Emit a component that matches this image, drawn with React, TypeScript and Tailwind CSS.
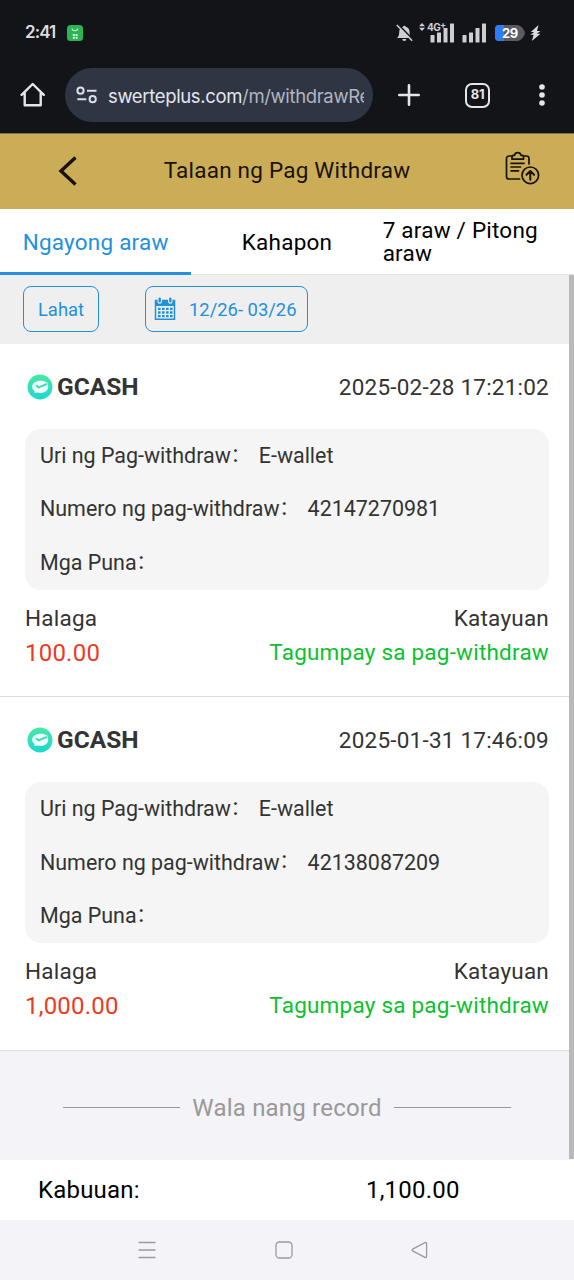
type WithdrawRecord = {
  method: string;
  date: string;
  type: string;
  number: string;
  amount: string;
  status: string;
};

const records: WithdrawRecord[] = [
  {
    method: "GCASH",
    date: "2025-02-28 17:21:02",
    type: "E-wallet",
    number: "42147270981",
    amount: "100.00",
    status: "Tagumpay sa pag-withdraw",
  },
  {
    method: "GCASH",
    date: "2025-01-31 17:46:09",
    type: "E-wallet",
    number: "42138087209",
    amount: "1,000.00",
    status: "Tagumpay sa pag-withdraw",
  },
];

function SignalBars() {
  return (
    <svg width="25" height="20" viewBox="0 0 25 20" fill="#cfcfd2">
      <rect x="0.5" y="12" width="4" height="7.5" rx="0.5" />
      <rect x="7" y="9.5" width="4" height="10" rx="0.5" />
      <rect x="13.5" y="5" width="4" height="14.5" rx="0.5" />
      <rect x="20" y="0.5" width="4" height="19" rx="0.5" />
    </svg>
  );
}

function StatusBar() {
  return (
    <div className="flex h-[65px] items-center pl-[25px] pr-[33px] font-['Inter',sans-serif] text-[#dcdcde]">
      <span className="w-[31px] whitespace-nowrap text-[17px] font-semibold tracking-[-0.9px]">2:41</span>
      <svg className="ml-[11px]" width="16" height="16" viewBox="0 0 16 16">
        <rect width="16" height="16" rx="3.5" fill="#2cb455" />
        <path d="M5 3.5c.6 3 5.2 3 5.8 0" fill="none" stroke="#d9f5e1" strokeWidth="1.1" />
        <path d="M5.8 9h2v2h-2zM8.6 9h2v2h-2zM5.8 11.8h2v2h-2zM8.6 11.8h2v2h-2z" fill="#d9f5e1" />
      </svg>

      <svg className="ml-auto" width="17" height="18" viewBox="0 0 17 18">
        <path
          d="M1 14h14.6c-1.500-1.600-2-2.800-2-5.800 0-3-1.500-5-3.800-5.500a1.500 1.500 0 0 0-2.800 0C4.700 3.200 3.200 5.200 3.200 8.200c0 3-.7 4.200-2.200 5.800zM6.300 15a2 2 0 0 0 4 0z"
          fill="#cfcfd2"
        />
        <path d="M2 .2l15.500 16" stroke="#131418" strokeWidth="1.8" />
        <path d="M.8 1l15.400 15.800" stroke="#cfcfd2" strokeWidth="1.6" />
      </svg>

      <div className="relative ml-[17px] flex">
        <svg className="absolute left-[-11px] top-0" width="6" height="8" viewBox="0 0 6 8" fill="#cfcfd2">
          <path d="M3 0L6 3.300H0zM3 8L0 4.700h6z" />
        </svg>
        <SignalBars />
        <span className="absolute left-[-3px] top-0 h-[9px] w-[13px] bg-[#131418] text-[10px] font-bold leading-[9px] tracking-[-0.6px] text-[#cfcfd2]">
          4G
        </span>
        <span className="absolute left-[10px] top-[-3px] text-[9px] font-bold leading-[9px] text-[#cfcfd2]">+</span>
      </div>
      <div className="ml-[7px]">
        <SignalBars />
      </div>

      <div className="relative ml-[8px] h-4 w-[30px]">
        <svg width="30" height="16" viewBox="0 0 30 16">
          <path d="M4 0H22c4 0 7 4 8 8-1 4-4 8-8 8H4a4 4 0 0 1-4-4V4a4 4 0 0 1 4-4z" fill="#5b5b61" />
          <path d="M4 0H9V16H4a4 4 0 0 1-4-4V4a4 4 0 0 1 4-4z" fill="#2e7cf6" />
        </svg>
        <span className="absolute left-[7px] top-0 text-[13px] font-bold leading-4 tracking-[-0.5px] text-white">29</span>
      </div>
      <svg className="ml-[5px]" width="11" height="16" viewBox="0 0 11 16" fill="#dcdcde">
        <path d="M8.5 0L0.8 7h3.4L0.3 9.800h3.400L1.800 16 10.500 8.800H6.800L10.500 6H7z" />
      </svg>
    </div>
  );
}

function BrowserBar() {
  return (
    <div className="flex h-[60px] items-center pl-[20px] font-['Inter',sans-serif]">
      <svg width="26" height="26" viewBox="0 0 26 26" fill="none" stroke="#e6e6e9" strokeWidth="2.4" strokeLinejoin="round">
        <path d="M1.6 12.8L12.7 2l11.1 10.8M4.700 11v12.300h16V11" strokeLinecap="round" />
      </svg>
      <div className="ml-[19px] flex h-[54px] w-[308px] items-center rounded-full bg-[#303544] pl-[11px] pr-[9px]">
        <svg width="22" height="18" viewBox="0 0 22 18" fill="none" stroke="#dcdfe8" strokeWidth="2">
          <circle cx="4.5" cy="4.7" r="3.1" />
          <path d="M11 4.7h9.5M1.3 13.2h9" />
          <circle cx="16.7" cy="13.2" r="3.1" />
        </svg>
        <div className="ml-[10px] mt-[3px] flex-1 overflow-hidden whitespace-nowrap text-[18.5px] tracking-[-0.35px] text-[#e3e5ee]">
          swerteplus.com<span className="text-[#b1b5c2]">/m/withdrawRe</span>
        </div>
      </div>
      <svg className="ml-[25px]" width="22" height="22" viewBox="0 0 22 22" stroke="#e6e6e9" strokeWidth="2.6" strokeLinecap="round">
        <path d="M11 1.3v19.4M1.3 11h19.4" />
      </svg>
      <div className="ml-[45px] flex h-[25px] w-[25px] items-center justify-center rounded-[7px] border-[2.5px] border-[#e6e6e9] text-[13px] font-bold tracking-[-0.3px] text-[#e6e6e9]">
        81
      </div>
      <svg className="ml-[49px]" width="6" height="22" viewBox="0 0 6 22" fill="#e6e6e9">
        <circle cx="3" cy="3" r="2.8" />
        <circle cx="3" cy="11" r="2.8" />
        <circle cx="3" cy="19" r="2.8" />
      </svg>
    </div>
  );
}

function PageHeader() {
  return (
    <header className="flex h-[76px] items-center border-t border-[#7f7350] bg-[#cbad58] pb-[2px] pl-[58px] pr-[34px] text-[#1a1208]">
      <svg width="20" height="30" viewBox="0 0 20 30" fill="none" stroke="#1a1208" strokeWidth="3.4">
        <path d="M17.500 1.500L3 15l14.500 13.500" />
      </svg>
      <h1 className="-ml-[9px] flex-1 text-center text-[22.5px] tracking-[0.22px]">Talaan ng Pag Withdraw</h1>
      <svg className="-mt-[5px]" width="35" height="34" viewBox="0 0 35 34" fill="none" stroke="#1a1208" strokeWidth="1.7" strokeLinecap="round" strokeLinejoin="round">
        <path d="M7 5H4a2.500 2.500 0 0 0-2.500 2.500v18A2.500 2.500 0 0 0 4 28h10.500M18.500 5h3A2.500 2.500 0 0 1 24 7.500V13" />
        <path d="M7 8.200V5.500Q7 4.300 8.200 4.300h1.300a3.300 3.300 0 0 1 6.500 0h1.300q1.200 0 1.200 1.200v2.700z" />
        <path d="M6 12.300h13M6 16h9.500M6 19.800h7.500" />
        <circle cx="25.3" cy="24.3" r="8.3" />
        <path d="M25.300 28.700v-8.400M21.500 23.800l3.800-3.800 3.800 3.800" strokeWidth="2" />
      </svg>
    </header>
  );
}

function Tabs() {
  return (
    <nav className="grid h-[66px] grid-cols-3 border-b border-[#e3e3e3] bg-white text-[22.5px] leading-[23px] tracking-[0.22px] text-black">
      <div className="-mb-px flex items-center justify-center border-b-[3px] border-[#2490db] pt-[3px] text-[#2490db]">
        Ngayong araw
      </div>
      <div className="flex items-center justify-center pt-px">Kahapon</div>
      <div className="flex items-center pt-px">
        <span className="w-[175px]">7 araw / Pitong araw</span>
      </div>
    </nav>
  );
}

function CalendarIcon() {
  return (
    <svg width="22" height="24" viewBox="0 0 22 24">
      <path d="M1.5 3.5h19v18.7H1.5z" fill="none" stroke="#2490db" strokeWidth="1.5" />
      <path d="M1 3h20v6H1z" fill="#2490db" />
      <path d="M5.7 3v1.500M16.300 3v1.500" stroke="#efefef" strokeWidth="4.500" strokeLinecap="round" />
      <path d="M5.700 1.800v2.400M16.300 1.800v2.400" stroke="#2490db" strokeWidth="2.400" strokeLinecap="round" />
      <path
        d="M4 11.800h2.600M8 11.800h2.600M12 11.800h2.600M16 11.800h2.600M4 15.500h2.600M8 15.500h2.600M12 15.500h2.600M16 15.500h2.600M4 19.200h2.600M8 19.200h2.600M12 19.200h2.600M16 19.200h2.600"
        stroke="#2490db"
        strokeWidth="2.300"
      />
    </svg>
  );
}

function Filters() {
  return (
    <div className="flex h-[69px] bg-[#efefef] pl-[23px] pt-[11px] text-[18.4px] text-[#2490db]">
      <button className="h-[46px] w-[76px] rounded-[8px] border border-[#2490db] pt-px">Lahat</button>
      <button className="ml-[46px] flex h-[46px] w-[163px] items-center rounded-[8px] border border-[#2490db] pl-[8px]">
        <CalendarIcon />
        <span className="ml-[13px] mt-px whitespace-nowrap">12/26- 03/26</span>
      </button>
    </div>
  );
}

function GcashLogo() {
  return (
    <svg width="26" height="26" viewBox="0 0 26 26">
      <defs>
        <linearGradient id="gcash" x1="0" y1="0" x2="0" y2="1">
          <stop offset="0" stopColor="#48e8a6" />
          <stop offset="1" stopColor="#1cd8d0" />
        </linearGradient>
      </defs>
      <circle cx="13" cy="13" r="12.5" fill="url(#gcash)" />
      <path d="M13.5 6.8c3 0 4.500.7 6.500 1.600.8 1 1.200 2.400 1.200 4.300 0 3.700-3.400 6.300-8 6.300-1 0-1.800-.1-2.600-.4L7.600 19l-.2-2.200C5.900 15.700 5.200 14.300 5.200 12.700c0-3.400 3.600-5.900 8.300-5.900z" fill="#f2fffb" />
      <path d="M9 11.200l2.700 2.200L20 9.800" fill="none" stroke="#33ddb8" strokeWidth="1.8" />
    </svg>
  );
}

function DetailRow({ label, value }: { label: string; value?: string }) {
  return (
    <div className="flex h-[53.5px] items-center">
      <span>{label}</span>
      <span className="w-[22px] text-[19px]">：</span>
      {value && <span className="ml-[6px]">{value}</span>}
    </div>
  );
}

function RecordCard({ record }: { record: WithdrawRecord }) {
  return (
    <article className="h-[353.4px] border-b border-[#dedede] bg-white px-[25px] text-[21.45px] text-[#333]">
      <div className="flex h-[85px] items-center pt-px">
        <span className="ml-[2px]">
          <GcashLogo />
        </span>
        <span className="ml-[4px] text-[24.5px] font-bold">{record.method}</span>
        <span className="ml-auto pt-px text-[22.5px] tracking-[0.22px]">{record.date}</span>
      </div>
      <div className="h-[161px] rounded-[16px] bg-[#f5f5f5] pl-[15px]">
        <DetailRow label="Uri ng Pag-withdraw" value={record.type} />
        <DetailRow label="Numero ng pag-withdraw" value={record.number} />
        <DetailRow label="Mga Puna" />
      </div>
      <div className="mt-[12px] flex h-[33px] items-center justify-between text-[22.5px] tracking-[0.22px]">
        <span>Halaga</span>
        <span>Katayuan</span>
      </div>
      <div className="flex h-[35px] items-center justify-between text-[22.5px] tracking-[0.22px]">
        <span className="text-[24px] text-[#ec3a24]">{record.amount}</span>
        <span className="text-[#0bc12f]">{record.status}</span>
      </div>
    </article>
  );
}

function NavButtons() {
  return (
    <div className="flex h-[60px] items-center bg-[#f4f3f8] pl-[138px] text-[#9b9a9f]">
      <svg width="18" height="18" viewBox="0 0 18 18" stroke="currentColor" strokeWidth="1.3">
        <path d="M.5 1.5h17M.5 9h17M.5 16.5h17" />
      </svg>
      <svg className="ml-[119px]" width="18" height="18" viewBox="0 0 18 18" fill="none" stroke="currentColor" strokeWidth="1.3">
        <rect x="1" y="1" width="16" height="16" rx="3.5" />
      </svg>
      <svg className="ml-[118px]" width="18" height="18" viewBox="0 0 18 18" fill="none" stroke="currentColor" strokeWidth="1.3" strokeLinejoin="round">
        <path d="M1.600 8.200L14 1.700q1.600-.7 1.600 1v12.600q0 1.700-1.600 1L1.600 9.800q-1.200-.8 0-1.600z" />
      </svg>
    </div>
  );
}

export default function App() {
  return (
    <div className="flex h-[1280px] w-[574px] flex-col overflow-hidden bg-white font-['Roboto','Noto_Sans_CJK_SC',sans-serif]">
      <div className="h-[133px] shrink-0 bg-[#131418]">
        <StatusBar />
        <BrowserBar />
      </div>
      <PageHeader />
      <Tabs />
      <main className="relative h-[885px] bg-[#f4f3f8]">
        <Filters />
        {records.map((record) => (
          <RecordCard key={record.date} record={record} />
        ))}
        <div className="flex h-[109px] items-center justify-center pt-[5px] text-[24px] tracking-[0.2px] text-[#999]">
          <span className="h-px w-[117px] bg-[#999]" />
          <span className="mx-[12px]">Wala nang record</span>
          <span className="h-px w-[117px] bg-[#999]" />
        </div>
        <div className="absolute right-0 top-0 h-[884px] w-[5px] bg-[#b9b9b9]" />
      </main>
      <footer className="grid h-[60px] grid-cols-2 items-center bg-white text-[24px] tracking-[0.2px] text-black">
        <span className="pl-[38px]">Kabuuan:</span>
        <span className="pl-[79px]">1,100.00</span>
      </footer>
      <NavButtons />
    </div>
  );
}
